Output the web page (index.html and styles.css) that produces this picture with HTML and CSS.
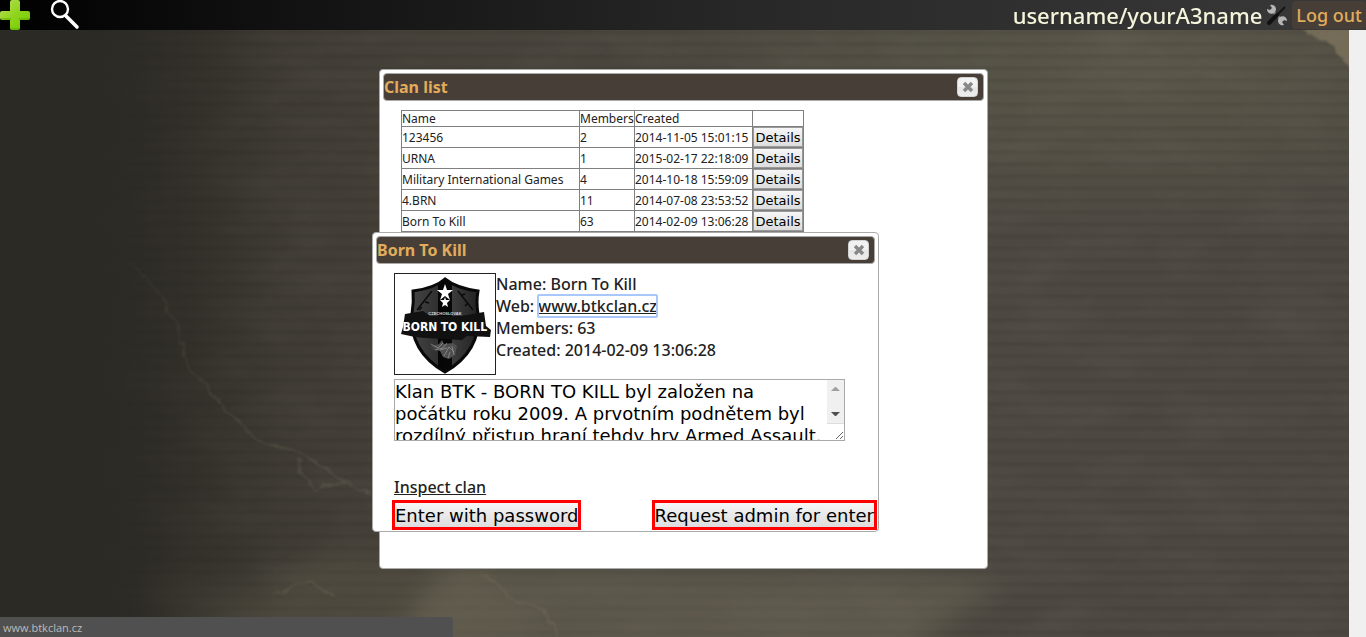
FILE: index.html
```html
<!DOCTYPE html>
<html lang="en">
<head>
<meta charset="utf-8">
<title>Clan list</title>
<link rel="stylesheet" href="styles.css">
</head>
<body>
<svg class="terrain" viewBox="0 0 1366 637" preserveAspectRatio="xMidYMid slice" aria-hidden="true">
  <defs>
    <filter id="soft" x="-20%" y="-20%" width="140%" height="140%"><feGaussianBlur stdDeviation="14"/></filter>
    <filter id="rough" x="-20%" y="-20%" width="140%" height="140%"><feTurbulence type="fractalNoise" baseFrequency=".06" numOctaves="4" seed="4" result="n"/><feDisplacementMap in="SourceGraphic" in2="n" scale="14" xChannelSelector="R" yChannelSelector="G"/><feGaussianBlur stdDeviation="1"/></filter>
    <filter id="grain" x="0" y="0" width="100%" height="100%"><feTurbulence type="fractalNoise" baseFrequency=".012 .03" numOctaves="5" seed="8"/><feColorMatrix values="0 0 0 0 .6  0 0 0 0 .58  0 0 0 0 .5  .7 0 0 0 -.28"/></filter>
    <linearGradient id="fade"><stop offset="0" stop-color="#2b2a25"/><stop offset=".06" stop-color="#2b2a25"/><stop offset=".2" stop-color="#2b2a25" stop-opacity="0"/></linearGradient>
  </defs>
  <rect width="1366" height="637" filter="url(#grain)" opacity=".12"/>
  <path d="M180 637L140 580L260 585L330 550L480 568L540 637Z" fill="#6b6551" opacity=".28" filter="url(#soft)"/>
  <path d="M380 660L450 560L760 572L1000 580L900 660Z" fill="#78735f" opacity=".4" filter="url(#soft)"/>
  <g filter="url(#rough)" fill="none" stroke="#817963">
    <path d="M130 260L165 300L180 340L192 370L222 405L257 440L300 453L338 476L372 496" stroke-width="2" opacity=".3"/>
    <path d="M295 460L315 490L345 482M270 592L310 582L335 596M480 570L515 602L545 610L556 637" stroke-width="2" opacity=".28"/>
    <path d="M1298 20L1320 42L1335 48L1352 72V20Z" fill="#80765f" stroke="none" opacity=".75"/>
  </g>
  <rect width="1366" height="637" fill="url(#fade)"/>
</svg>

<header class="topbar">
  <nav class="tools" aria-label="Clan tools">
    <button class="icon-button" type="button" aria-label="Add">
      <svg width="30" height="30" viewBox="0 0 30 30"><defs><linearGradient id="green" x2="1" y2="1"><stop stop-color="#b9df5d"/><stop offset=".5" stop-color="#8fd41c"/><stop offset="1" stop-color="#71c800"/></linearGradient></defs><path d="M12 0h6q2 0 2 2v9h8q2 0 2 2v5q0 2-2 2h-8v8q0 2-2 2h-6q-2 0-2-2v-8H2q-2 0-2-2v-5q0-2 2-2h8V2q0-2 2-2z" fill="url(#green)"/><path d="M1 19h10M19 19h10M11 29h8" stroke="#59a900" fill="none"/></svg>
    </button>
    <button class="icon-button" type="button" aria-label="Search">
      <svg width="30" height="30" viewBox="0 0 30 30" fill="none" stroke="#fff"><circle cx="10" cy="9" r="8" stroke-width="2.4"/><path d="M16 16L27 27" stroke-width="3.6" stroke-linecap="round"/></svg>
    </button>
  </nav>
  <div class="account">
    <span class="username">username/yourA3name</span>
    <button class="icon-button" type="button" aria-label="Settings">
      <svg width="22" height="22" viewBox="0 0 22 22"><path d="M5 6L17 17" stroke="#777" stroke-width="2.4"/><path d="M19 3L11 11" stroke="#151515" stroke-width="2"/><path d="M11 11L3 19" stroke="#111" stroke-width="4" stroke-linecap="round"/><path d="M4 1a4.500 4.500 0 1 1-3 4l3 1 2-2zM18 21a4.500 4.500 0 1 1 3-4l-3-1-2 2z" fill="#b5b5b5"/></svg>
    </button>
    <button class="logout" type="button">Log out</button>
  </div>
</header>

<main class="desktop">
  <section class="dialog clan-list" aria-labelledby="list-title">
    <header class="titlebar">
      <h2 id="list-title">Clan list</h2>
      <button class="close" type="button" aria-label="Close"><svg width="12" height="12" viewBox="0 0 12 12"><path d="M2 2L10 10M10 2L2 10" stroke="#888" stroke-width="3.4"/></svg></button>
    </header>
    <table class="clans">
      <colgroup><col class="col-name"><col class="col-members"><col class="col-created"><col class="col-action"></colgroup>
      <thead><tr><th>Name</th><th>Members</th><th>Created</th><th></th></tr></thead>
      <tbody>
        <tr><td>123456</td><td>2</td><td>2014-11-05 15:01:15</td><td><button class="details" type="button">Details</button></td></tr>
        <tr><td>URNA</td><td>1</td><td>2015-02-17 22:18:09</td><td><button class="details" type="button">Details</button></td></tr>
        <tr><td>Military International Games</td><td>4</td><td>2014-10-18 15:59:09</td><td><button class="details" type="button">Details</button></td></tr>
        <tr><td>4.BRN</td><td>11</td><td>2014-07-08 23:53:52</td><td><button class="details" type="button">Details</button></td></tr>
        <tr><td>Born To Kill</td><td>63</td><td>2014-02-09 13:06:28</td><td><button class="details" type="button">Details</button></td></tr>
      </tbody>
    </table>
  </section>

  <section class="dialog clan-detail" aria-labelledby="detail-title">
    <header class="titlebar">
      <h2 id="detail-title">Born To Kill</h2>
      <button class="close" type="button" aria-label="Close"><svg width="12" height="12" viewBox="0 0 12 12"><path d="M2 2L10 10M10 2L2 10" stroke="#888" stroke-width="3.4"/></svg></button>
    </header>
    <div class="detail-body">
      <div class="summary">
        <svg class="emblem" viewBox="0 0 100 100" role="img" aria-label="Born To Kill emblem">
          <defs><linearGradient id="shield"><stop stop-color="#444"/><stop offset=".39" stop-color="#303030"/><stop offset=".4" stop-color="#050505"/><stop offset=".6" stop-color="#080808"/><stop offset=".61" stop-color="#3c3c3c"/><stop offset="1" stop-color="#222"/></linearGradient></defs>
          <path d="M50 5Q40 14 18 17Q19 28 17 40Q14 77 50 98Q86 77 83 40Q81 28 83 17Q61 14 50 5Z" fill="url(#shield)" stroke="#090909" stroke-width="3"/>
          <path d="M22 36L37 17M24 36l3-3m3-5l4 1M63 17L78 36M67 21l3-1m3 9l-3 3" stroke="#0a0a0a" stroke-width="1.500" fill="none"/>
          <path d="M50 10l2 6h6l-5 4 2 6-5-4-5 4 2-6-5-4h6zM50 23l1 3h4l-3 3 1 4-3-2-3 2 1-4-3-3h4z" fill="#fff"/>
          <path d="M10 40L28 37L35 42H66L89 38L91 52L96 56L95 63L72 62L67 66L30 64L20 63L6 60L8 53Z" fill="#111"/>
          <text class="emblem-small" x="50" y="41" text-anchor="middle">CZECHOSLOVAK</text>
          <text class="emblem-word" x="25" y="57" text-anchor="middle">BORN</text>
          <text class="emblem-word" x="54" y="57" text-anchor="middle">TO</text>
          <text class="emblem-word" x="79" y="57" text-anchor="middle">KILL</text>
          <path d="M35 73l9-3 3-4 2 4 9-1 4 3-2 9-6 4-6-2-3-6-9-2 6-1z" fill="#505050"/>
          <path d="M36 70l7 4 5-5M40 76l8-2 4-5M49 82l5-9 5 5M53 84l2-6M45 76l7-2M57 72l2 9" fill="none" stroke="#999" stroke-width=".7"/>
        </svg>
        <div class="facts">
          <div>Name: Born To Kill</div>
          <div>Web: <a class="web" href="#">www.btkclan.cz</a></div>
          <div>Members: 63</div>
          <div>Created: 2014-02-09 13:06:28</div>
        </div>
      </div>
      <div class="description-box">
        <textarea class="description" aria-label="Clan description">Klan BTK - BORN TO KILL byl založen na počátku roku 2009. A prvotním podnětem byl rozdílný přistup hraní tehdy hry Armed Assault.</textarea>
        <div class="scrollbar" aria-hidden="true">
          <svg width="17" height="44" viewBox="0 0 17 44"><path d="M4 11L8 7h1l4 4z" fill="#a0a0a0"/><path d="M4 32h9l-4 4H8z" fill="#505050"/></svg>
        </div>
      </div>
      <a class="inspect" href="#">Inspect clan</a>
      <div class="actions">
        <button class="action" type="button">Enter with password</button>
        <button class="action" type="button">Request admin for enter</button>
      </div>
    </div>
  </section>
</main>
<div class="page-gutter"></div>
<div class="status">www.btkclan.cz</div>
</body>
</html>
```
FILE: styles.css
```css
* { box-sizing: border-box; }

body {
  margin: 0;
  min-height: 100vh;
  overflow: hidden;
  color: #222;
  font: 16px/22px "Noto Sans", "Open Sans", sans-serif;
  background:
    repeating-linear-gradient(180deg, transparent 0 5px, rgba(0, 0, 0, .07) 8px, transparent 12px),
    radial-gradient(ellipse 500px 180px at 1150px 60px, rgba(105, 102, 82, .5), transparent),
    linear-gradient(90deg, #2b2a25 0, #2d2b26 80px, #3d3932 240px, #46423a 420px, #4d4941 800px, #4c4740 1366px);
}

button { margin: 0; padding: 0; font-family: inherit; }

.terrain {
  position: absolute;
  inset: 0;
  z-index: -1;
  width: 100%;
  height: 100%;
}

.topbar {
  position: relative;
  z-index: 3;
  display: flex;
  justify-content: space-between;
  height: 30px;
  background: linear-gradient(90deg, #000, #111 20%, #282828 55%, #393939);
}

.tools { display: flex; gap: 20px; }

.icon-button { display: flex; align-items: center; border: 0; background: none; }

.account { display: flex; align-items: center; gap: 4px; }

.username { color: #f5f5dc; font-size: 22px; font-weight: 500; line-height: 28px; }

.logout {
  height: 28px;
  padding: 0 4px;
  border: 0;
  border-radius: 4px;
  background: #473e38;
  color: #e1ac5b;
  font-size: 18px;
  font-weight: 500;
  line-height: 24px;
}

.dialog {
  position: absolute;
  padding: 3px;
  border: 1px solid #aaa;
  border-radius: 4px;
  background: #fff;
}

.clan-list { left: calc(50% - 304px); top: 69px; width: 609px; height: 500px; }
.clan-detail { left: calc(50% - 311px); top: 232px; width: 507px; }

.titlebar {
  display: flex;
  align-items: center;
  justify-content: space-between;
  height: 28px;
  padding-right: 5px;
  border: 1px solid #aaa;
  border-radius: 4px;
  background: #473e38;
}

.titlebar h2 { margin: 0; color: #e1ac5b; font-size: 16px; line-height: 24px; }

.close {
  display: grid;
  place-items: center;
  width: 21px;
  height: 20px;
  border: 1px solid #d3d3d3;
  border-radius: 4px;
  background: linear-gradient(#f2f2f2 50%, #e6e6e6 50%, #ededed);
}

.clans {
  margin: 9px 0 0 18px;
  table-layout: fixed;
  width: 403px;
  border-collapse: collapse;
  font-size: 12px;
  line-height: 15px;
}

.clans th, .clans td {
  padding: 0;
  border: 1px solid gray;
  font-weight: 400;
  text-align: left;
  white-space: nowrap;
}

.col-name { width: 178px; }
.col-members { width: 55px; }
.col-created { width: 118px; }
.col-action { width: 51px; }

.details {
  display: block;
  width: 100%;
  height: 20px;
  padding-top: 1px;
  border: 1px solid #999;
  background: linear-gradient(#f6f6f6, #ddd);
  color: #000;
  font: 13px/16px "DejaVu Sans", sans-serif;
}

.detail-body { padding: 9px 0 0 18px; }

.summary { display: flex; }

.facts { font-weight: 500; }

.emblem { flex: none; width: 102px; height: 102px; border: 1px solid #222; }
.emblem-small { fill: #ddd; font: bold 4px "Liberation Sans", sans-serif; }
.emblem-word { fill: #fff; font: bold 12px "DejaVu Sans Condensed", "DejaVu Sans", sans-serif; }

.web {
  border-radius: 1px;
  outline: 2px solid #a8c7fa;
  outline-offset: -1px;
  color: #222;
}

.description-box { position: relative; width: 451px; margin-top: 4px; }

.description {
  display: block;
  width: 100%;
  height: 62px;
  margin: 0;
  padding: 1px 18px 0 0;
  border: 1px solid #a9a9a9;
  background: #fff;
  color: #000;
  font: 18px/22px "DejaVu Sans", sans-serif;
  resize: both;
}

.scrollbar {
  position: absolute;
  top: 1px;
  right: 1px;
  width: 17px;
  height: 44px;
  border-bottom: 1px solid #ddd;
  background: #f0f0f0;
}

.inspect { display: block; width: max-content; margin-top: 35px; color: #222; font-weight: 500; }

.actions { display: flex; justify-content: space-between; margin: 2px -2px -2px; }

.action {
  height: 30px;
  padding-top: 2px;
  border: 3px solid red;
  background: linear-gradient(#f6f6f6, #ddd);
  color: #000;
  font: 18px/22px "DejaVu Sans", sans-serif;
}

.page-gutter {
  position: fixed;
  inset: 30px 0 0 auto;
  width: 17px;
  background: #f0f0f0;
}

.status {
  position: fixed;
  left: 0;
  bottom: 0;
  width: 453px;
  height: 20px;
  padding-left: 3px;
  border-top-right-radius: 3px;
  background: #505050;
  color: #bbb;
  font: 11px/22px "Open Sans", sans-serif;
}
```
